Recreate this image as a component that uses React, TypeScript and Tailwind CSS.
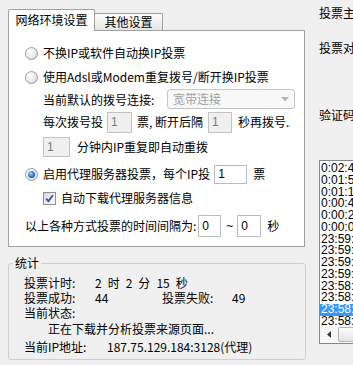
const cjk = "font-['Noto_Sans_CJK_SC','Noto_Sans_CJK_JP',sans-serif]";

const logRows = [
  "0:02:41",
  "0:01:52",
  "0:01:13",
  "0:00:47",
  "0:00:25",
  "0:00:08",
  "23:59:51",
  "23:59:33",
  "23:59:15",
  "23:59:02",
  "23:58:44",
  "23:58:29",
  "23:58:10",
  "23:58:01"
];
const selectedRow = 12;

const Radio = ({ checked }: { checked?: boolean }) => (
  <span className="flex h-[13px] w-[13px] shrink-0 items-center justify-center rounded-full border border-[#9c9c9c] bg-[radial-gradient(circle_at_35%_35%,#ffffff_0%,#e8e8e8_55%,#cdcdcd_100%)]">
    {checked && (
      <span className="h-[7px] w-[7px] rounded-full bg-[radial-gradient(circle_at_40%_35%,#a8dcff_0%,#2f86d8_45%,#0d3f7a_100%)]" />
    )}
  </span>
);

const Check = () => (
  <span className="flex h-[13px] w-[13px] shrink-0 items-center justify-center border border-[#8f8f8f] bg-[linear-gradient(135deg,#d8d8d8,#ffffff)]">
    <svg width="9" height="9" viewBox="0 0 9 9">
      <path d="M1.2 4.6 L3.4 7.2 L7.9 1.3" fill="none" stroke="#2b56a8" strokeWidth="1.8" />
    </svg>
  </span>
);

// disabled edit box (grey) vs normal one (white)
const Box = ({ value, disabled, className }: { value: string; disabled?: boolean; className: string }) => (
  <span
    className={
      "flex shrink-0 items-center border pl-[3px] font-['Liberation_Sans',sans-serif] text-[12px] " +
      (disabled ? "border-[#c3c3c3] bg-[#f0f0f0] text-[#7a7a7a] " : "border-[#b9bcc2] bg-white text-black ") +
      className
    }
  >
    {value}
  </span>
);

const App = () => {
  return (
    <div className={"flex h-[365px] w-[353px] overflow-hidden bg-[#f0f0f0] text-[12px] text-black " + cjk}>
      {/* left side: tabs + stats */}
      <div className="flex w-[306px] shrink-0 flex-col pl-[8px] pt-[9px]">
        <div className="flex h-[21px] items-end">
          <div className="relative z-10 -mb-px flex h-[22px] w-[87px] items-center justify-center rounded-t-[2px] border border-b-0 border-[#a0a0a0] bg-white pb-[1px] leading-none">
            网络环境设置
          </div>
          <div className="flex h-[17px] w-[68px] items-center justify-center rounded-tr-[2px] border border-b-0 border-l-0 border-[#a0a0a0] bg-[linear-gradient(#fbfbfb,#e6e6e6)] leading-none">
            其他设置
          </div>
        </div>

        <div className="flex h-[217px] w-[297px] flex-col border border-[#a0a0a0] bg-white pl-[16px] pt-[10px] leading-none whitespace-nowrap">
          <div className="flex h-[24px] items-center gap-[5px]">
            <Radio />
            <span>不换IP或软件自动换IP投票</span>
          </div>
          <div className="flex h-[24px] items-center gap-[5px]">
            <Radio />
            <span>使用Adsl或Modem重复拨号/断开换IP投票</span>
          </div>
          <div className="flex h-[21px] items-center pl-[18px]">
            <span className="w-[124px]">当前默认的拨号连接:</span>
            <span className="flex h-[20px] w-[128px] items-center justify-between self-start rounded-[3px] border border-[#c5c5c5] bg-[#f8f8f8] pl-[5px] pr-[5px] text-[#a0a0a0]">
              宽带连接
              <svg width="8" height="5" viewBox="0 0 8 5">
                <path d="M0 0 L8 0 L4 4.5 Z" fill="#b4b4b4" />
              </svg>
            </span>
          </div>
          <div className="flex h-[24px] items-center pl-[18px]">
            <span>每次拨号投</span>
            <Box value="1" disabled className="ml-[4px] h-[21px] w-[25px]" />
            <span className="ml-[5px]">票, 断开后隔</span>
            <Box value="1" disabled className="ml-[5px] h-[21px] w-[24px]" />
            <span className="ml-[6px]">秒再拨号.</span>
          </div>
          <div className="mt-[1px] flex h-[24px] items-center pl-[18px]">
            <Box value="1" disabled className="h-[20px] w-[27px]" />
            <span className="ml-[7px]">分钟内IP重复即自动重拨</span>
          </div>
          <div className="mt-[4px] flex h-[22px] items-center">
            <Radio checked />
            <span className="ml-[5px]">启用代理服务器投票，每个IP投</span>
            <Box value="1" className="ml-[4px] h-[19px] w-[33px]" />
            <span className="ml-[6px]">票</span>
          </div>
          <div className="mt-[3px] flex h-[20px] items-center gap-[5px] pl-[18px]">
            <Check />
            <span>自动下载代理服务器信息</span>
          </div>
          <div className="mt-[6px] flex h-[24px] items-center">
            <span>以上各种方式投票的时间间隔为:</span>
            <Box value="0" className="ml-[2px] h-[22px] w-[23px]" />
            <span className="ml-[5px] font-['Liberation_Sans',sans-serif]">~</span>
            <Box value="0" className="ml-[4px] h-[22px] w-[24px]" />
            <span className="ml-[6px]">秒</span>
          </div>
        </div>

        <fieldset className="mt-[9px] h-[104px] w-[298px] rounded-[3px] border border-[#d0d0d0] pl-[4px] whitespace-nowrap">
          <legend className="px-[2px] leading-[14px]">统计</legend>
          <div className="flex flex-col pl-[11px] pt-[5px]">
            <div className="flex h-[15px] items-center">
              <span className="w-[71px]">投票计时:</span>
              <span className="flex gap-[6px]">
                <span>2</span>
                <span>时</span>
                <span>2</span>
                <span>分</span>
                <span>15</span>
                <span>秒</span>
              </span>
            </div>
            <div className="flex h-[15px] items-center">
              <span className="w-[71px]">投票成功:</span>
              <span className="w-[67px]">44</span>
              <span className="w-[70px]">投票失败:</span>
              <span>49</span>
            </div>
            <div className="flex h-[16px] items-center">当前状态:</div>
            <div className="flex h-[16px] items-center pl-[24px]">正在下载并分析投票来源页面...</div>
            <div className="flex h-[20px] items-center">
              <span className="w-[83px]">当前IP地址:</span>
              <span>187.75.129.184:3128(代理)</span>
            </div>
          </div>
        </fieldset>
      </div>

      {/* right side, cut off by the window edge */}
      <div className="ml-[13px] flex w-[60px] shrink-0 flex-col whitespace-nowrap pt-[6px] leading-[14px]">
        <div className="h-[14px]">投票主题</div>
        <div className="mt-[21px] h-[14px]">投票对象</div>
        <div className="mt-[53px] h-[14px]">验证码</div>
        <div className="mt-[38px] flex h-[184px] flex-col border border-[#828790] bg-white">
          <div className="flex-1 overflow-hidden pt-[2px] font-['Liberation_Sans',sans-serif] text-[12px]">
            {logRows.map((t, i) => (
              <div
                key={i}
                className={
                  "h-[11.75px] overflow-hidden pl-[1px] leading-[11.75px] " +
                  (i === selectedRow ? "bg-[#3399ff] text-white" : "")
                }
              >
                {t}
              </div>
            ))}
          </div>
          <div className="flex h-[17px] shrink-0 items-center bg-[#f6f6f6]">
            <span className="flex h-[17px] w-[18px] items-center justify-center">
              <svg width="4" height="7" viewBox="0 0 4 7">
                <path d="M4 0 L0 3.5 L4 7 Z" fill="#333" />
              </svg>
            </span>
            <span className="h-[15px] flex-1 rounded-[2px] border border-[#b5b5b5] bg-[linear-gradient(#fdfdfd,#e4e4e4)]" />
          </div>
        </div>
      </div>
    </div>
  );
};

export default App;
